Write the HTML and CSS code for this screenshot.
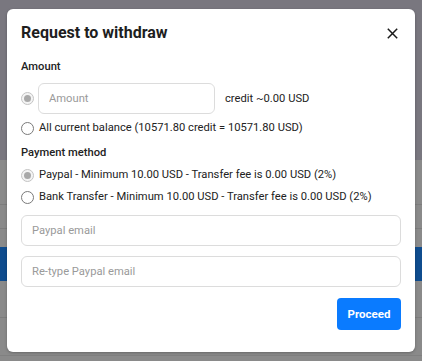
FILE: index.html
```html
<!DOCTYPE html>
<html lang="en">
<head>
    <meta charset="UTF-8">
    <meta name="viewport" content="width=device-width, initial-scale=1.0">
    <title>Request to withdraw</title>
    <link rel="stylesheet" href="styles.css">
</head>
<body>
    <div id="page">
        <div class="page-top"></div>
        <div class="page-row"></div>
        <div class="page-row short"></div>
        <div class="page-gap"></div>
        <div class="page-band"></div>
        <div class="page-row tall"></div>
        <div class="page-row last"></div>
    </div>

    <div id="withdrawModal" class="modal">
        <div class="modal-header">
            <h2>Request to withdraw</h2>
            <button class="close-btn" aria-label="Close">
                <svg width="11" height="11" viewBox="0 0 11 11">
                    <path d="M0.8 0.8 L10.2 10.2 M10.2 0.8 L0.8 10.2" stroke="#1a1a1a" stroke-width="1.5"/>
                </svg>
            </button>
        </div>

        <div class="label">Amount</div>
        <div class="amount-row">
            <span class="radio checked disabled"></span>
            <input class="field amount-field" type="text" placeholder="Amount">
            <span class="amount-note">credit ~0.00 USD</span>
        </div>
        <div class="option">
            <span class="radio"></span>
            <span>All current balance (10571.80 credit = 10571.80 USD)</span>
        </div>

        <div class="label label-method">Payment method</div>
        <div class="option">
            <span class="radio checked disabled"></span>
            <span>Paypal - Minimum 10.00 USD - Transfer fee is 0.00 USD (2%)</span>
        </div>
        <div class="option">
            <span class="radio"></span>
            <span>Bank Transfer - Minimum 10.00 USD - Transfer fee is 0.00 USD (2%)</span>
        </div>

        <input class="field email-field" type="text" placeholder="Paypal email">
        <input class="field email-field" type="text" placeholder="Re-type Paypal email">

        <div class="modal-footer">
            <button class="proceed-btn">Proceed</button>
        </div>
    </div>
</body>
</html>
```

FILE: styles.css
```css
body {
    font-family: 'Roboto', 'Liberation Sans', sans-serif;
    margin: 0;
    color: #222;
    background-color: #8a8a8a;
    overflow: hidden;
}
#page {
    height: 361px;
}
.page-top {
    height: 160px;
    background-color: #79777f;
}
.page-row {
    height: 44px;
    border-bottom: 1px solid #7d7d7d;
}
.page-row.short {
    height: 23px;
}
.page-gap {
    height: 18px;
}
.page-band {
    height: 34px;
    background-color: #0f4c8e;
}
.page-row.tall {
    height: 36px;
}
.page-row.last {
    height: 37px;
    border-bottom-color: #808080;
}

.modal {
    position: absolute;
    top: 9px;
    left: 7px;
    width: 380px;
    padding: 14px 14px 22px;
    background-color: white;
    border-radius: 6px;
    box-shadow: 0 1px 3px rgba(0,0,0,0.25);
}
.modal-header {
    display: flex;
    justify-content: space-between;
    align-items: center;
    height: 20px;
}
.modal-header h2 {
    margin: 0;
    font-size: 16px;
    font-weight: 700;
    line-height: 20px;
    color: #1e1e1e;
}
.close-btn {
    border: none;
    background: none;
    padding: 0;
    margin-right: 3px;
    width: 11px;
    height: 11px;
    display: flex;
    cursor: pointer;
}

.label {
    margin-top: 16px;
    font-size: 11.2px;
    font-weight: 500;
    line-height: 16px;
}
.label-method {
    margin-top: 9px;
}

.amount-row {
    display: flex;
    align-items: center;
    margin-top: 8px;
}
.amount-note {
    font-size: 11.2px;
    margin-left: 10px;
}

.option {
    display: flex;
    align-items: center;
    gap: 5px;
    margin-top: 6px;
    font-size: 11.2px;
    line-height: 16px;
}

.radio {
    box-sizing: border-box;
    width: 13px;
    height: 13px;
    border: 1px solid #7a7a7a;
    border-radius: 50%;
    flex-shrink: 0;
    position: relative;
    background: white;
}
.radio.checked.disabled {
    border-color: #c4c4c4;
    background: #f4f4f4;
}
.radio.checked.disabled::after {
    content: "";
    position: absolute;
    top: 2px;
    left: 2px;
    width: 7px;
    height: 7px;
    border-radius: 50%;
    background: #a9a9a9;
}

.field {
    box-sizing: border-box;
    height: 31px;
    border: 1px solid #dcdcdc;
    border-radius: 6px;
    padding: 0 10px;
    font-family: 'Roboto', 'Liberation Sans', sans-serif;
    font-size: 11.2px;
    color: #222;
    outline: none;
}
.field::placeholder {
    color: #9a9a9a;
}
.amount-field {
    width: 177px;
    margin-left: 4px;
}
.email-field {
    display: block;
    width: 100%;
    margin-top: 10px;
}

.modal-footer {
    display: flex;
    justify-content: flex-end;
    margin-top: 11px;
}
.proceed-btn {
    width: 64px;
    height: 32px;
    border: none;
    border-radius: 4px;
    background-color: #0a7bff;
    color: white;
    font-family: 'Roboto', 'Liberation Sans', sans-serif;
    font-size: 11.5px;
    font-weight: 700;
    cursor: pointer;
}
```
